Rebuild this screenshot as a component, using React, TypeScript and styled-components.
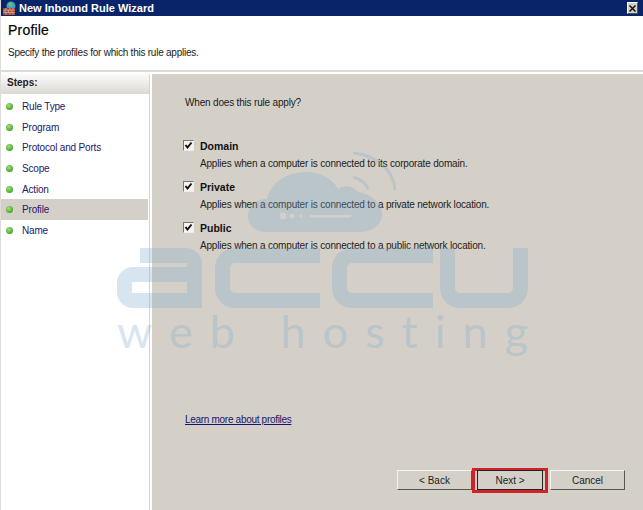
import styled, { createGlobalStyle } from 'styled-components';

const GlobalStyle = createGlobalStyle`
  html, body {
    margin: 0;
    padding: 0;
    background: #ffffff;
  }
  body {
    font-family: "Liberation Sans", Arial, sans-serif;
    font-size: 10px;
    letter-spacing: -0.18px;
    color: #111;
  }
`;

const Window = styled.div`
  position: relative;
  width: 643px;
  height: 510px;
  box-sizing: border-box;
  border-left: 1px solid #dedcd8;
  display: flex;
  flex-direction: column;
  overflow: hidden;
  background: #fff;
`;

const TitleBar = styled.div`
  height: 16px;
  flex: none;
  display: flex;
  align-items: center;
  gap: 2px;
  padding: 0 5px 0 2px;
  margin-left: -1px;
  background: #0a246a;
  color: #fff;
`;

const TitleText = styled.span`
  flex: 1;
  font-size: 11px;
  font-weight: 700;
  letter-spacing: 0;
  margin-top: -1px;
`;

const CloseButton = styled.div`
  width: 11px;
  height: 12px;
  display: flex;
  align-items: center;
  justify-content: center;
  background: #d4d0c8;
  border: 1px solid;
  border-color: #fff #555 #555 #fff;
  box-sizing: border-box;
`;

const Header = styled.header`
  height: 56px;
  flex: none;
  box-sizing: border-box;
  padding: 6px 7px 0;
  border-bottom: 2px solid #dcdad6;
`;

const Heading = styled.h1`
  margin: 0;
  font-size: 14px;
  line-height: 16px;
  letter-spacing: 0.2px;
  font-weight: 400;
  -webkit-text-stroke: 0.2px #000;
  color: #000;
`;

const Subheading = styled.p`
  margin: 8px 0 0;
  line-height: 14px;
  letter-spacing: -0.24px;
  color: #222;
`;

const Body = styled.div`
  flex: 1;
  display: flex;
  padding-top: 2px;
  min-height: 0;
`;

const Sidebar = styled.nav`
  width: 149px;
  flex: none;
  box-sizing: border-box;
  border-right: 1px solid #d8d6d2;
`;

const StepsTitle = styled.div`
  height: 20px;
  padding-left: 6px;
  font-size: 10px;
  font-weight: 700;
  line-height: 18px;
  letter-spacing: 0;
  color: #222;
  background: linear-gradient(#fbfbfa, #dcd9d3);
  margin-bottom: 2.4px;
`;

const StepRow = styled.div<{ $active?: boolean }>`
  height: 20.6px;
  display: flex;
  align-items: center;
  gap: 9px;
  padding-left: 5px;
  margin-right: 1px;
  color: #20206a;
  background: ${(p) => (p.$active ? '#d4d0c8' : 'transparent')};
`;

const StepDot = styled.span`
  width: 7px;
  height: 7px;
  border-radius: 50%;
  background: radial-gradient(circle at 40% 35%, #a5e07f, #4aa52c 70%);
`;

const Panel = styled.main`
  flex: 1;
  margin-left: 2px;
  background: #d4d0c8;
  box-sizing: border-box;
  padding: 22px 18px 20px 33px;
  display: flex;
  flex-direction: column;
`;

const Question = styled.p`
  margin: 0 0 29px;
  line-height: 14px;
  color: #1a1a1a;
`;

const Option = styled.div`
  display: grid;
  grid-template-columns: 11px auto;
  grid-template-rows: auto auto;
  align-content: start;
  column-gap: 6px;
  height: 41px;
  margin-left: -2px;
`;

const CheckBox = styled.span`
  width: 11px;
  height: 11px;
  margin-top: 1px;
  box-sizing: border-box;
  background: #f4f3f0;
  border: 1px solid;
  border-color: #777 #eee #eee #777;
  display: flex;
  align-items: center;
  justify-content: center;
`;

const OptionName = styled.div`
  font-size: 10.5px;
  line-height: 14px;
  letter-spacing: 0;
  font-weight: 700;
  color: #111;
`;

const OptionText = styled.div`
  grid-column: 2;
  margin-top: 4px;
  line-height: 14px;
  color: #222;
`;

const LearnLink = styled.a`
  margin-top: auto;
  margin-bottom: 43px;
  line-height: 14px;
  letter-spacing: -0.3px;
  color: #16166e;
  text-decoration: underline;
`;

const Buttons = styled.div`
  display: flex;
  justify-content: flex-end;
  align-items: center;
  height: 20px;
`;

const Button = styled.button<{ $primary?: boolean }>`
  width: ${(p) => (p.$primary ? '66px' : '75px')};
  height: 20px;
  box-sizing: border-box;
  padding: 0;
  font-family: inherit;
  font-size: 10px;
  color: #222;
  background: #d4d0c8;
  border: 1px solid;
  border-color: ${(p) => (p.$primary ? '#222' : '#f4f3f0 #555 #555 #f4f3f0')};
`;

const Highlight = styled.div`
  margin: 0 2px 0 0;
  height: 25px;
  display: flex;
  align-items: center;
  justify-content: center;
  box-sizing: border-box;
  width: 76px;
  border: 3px solid #d1222b;
`;

const Watermark = styled.div`
  position: absolute;
  left: 116px;
  top: 172px;
  width: 412px;
  opacity: 0.3;
  pointer-events: none;
  display: flex;
  flex-direction: column;
  align-items: stretch;
  color: #7dacce;
`;

const CloudLogo = styled.svg`
  display: block;
  width: 140px;
  height: 62px;
  margin-left: 131px;
  margin-bottom: 14px;
  overflow: visible;
`;

const BigWord = styled.div`
  display: flex;
  height: 60px;
`;

const LetterA = styled.div`
  width: 85px;
  margin-right: 13px;
  display: flex;
  flex-direction: column;
`;

const LetterATop = styled.div`
  height: 19px;
  margin-left: 23px;
  border-top: 15px solid currentColor;
  border-right: 15px solid currentColor;
  border-top-right-radius: 16px;
  box-sizing: border-box;
`;

const LetterABowl = styled.div`
  height: 41px;
  box-sizing: border-box;
  border: 15px solid currentColor;
  border-radius: 16px 0 0 16px;
`;

const LetterC = styled.div<{ $w: number; $gap: number }>`
  width: ${(p) => p.$w}px;
  margin-right: ${(p) => p.$gap}px;
  box-sizing: border-box;
  border: 15px solid currentColor;
  border-right: none;
  border-radius: 20px 0 0 20px;
`;

const LetterU = styled.div`
  width: 88px;
  box-sizing: border-box;
  border: 15px solid currentColor;
  border-top: none;
  border-radius: 0 0 20px 20px;
`;

const SmallWord = styled.div`
  margin-top: -4px;
  font-family: Lato, "Open Sans", sans-serif;
  font-weight: 400;
  font-size: 45px;
  line-height: 54px;
  letter-spacing: 17px;
  word-spacing: 0;
  white-space: nowrap;
`;

const steps = ['Rule Type', 'Program', 'Protocol and Ports', 'Scope', 'Action', 'Profile', 'Name'];

const options = [
  { name: 'Domain', text: 'Applies when a computer is connected to its corporate domain.' },
  { name: 'Private', text: 'Applies when a computer is connected to a private network location.' },
  { name: 'Public', text: 'Applies when a computer is connected to a public network location.' },
];

const FirewallIcon = () => (
  <svg width="15" height="15" viewBox="0 0 15 15">
    <circle cx="9" cy="5" r="4.5" fill="#3f9fd0" />
    <path d="M6 3 L9 1 L11 4 L8 6 Z" fill="#6cc46a" />
    <rect x="1" y="7" width="12" height="7" fill="#a8432f" />
    <path d="M1 9.2H13M1 11.5H13M4 7V9.2M8 7V9.2M11 7V9.2M3 9.2V11.5M6.5 9.2V11.5M10 9.2V11.5M4 11.5V14M8 11.5V14M11 11.5V14" stroke="#e2b7a6" strokeWidth="0.7" />
  </svg>
);

const CheckMark = () => (
  <svg width="9" height="9" viewBox="0 0 9 9">
    <path d="M1.5 4 L3.5 6.5 L7.5 1.5" fill="none" stroke="#111" strokeWidth="2" />
  </svg>
);

export default function App() {
  return (
    <>
      <GlobalStyle />
      <Window>
        <TitleBar>
          <FirewallIcon />
          <TitleText>New Inbound Rule Wizard</TitleText>
          <CloseButton>
            <svg width="7" height="7" viewBox="0 0 7 7">
              <path d="M0.5 0.5 L6.5 6.5 M6.5 0.5 L0.5 6.5" stroke="#111" strokeWidth="1.5" />
            </svg>
          </CloseButton>
        </TitleBar>
        <Header>
          <Heading>Profile</Heading>
          <Subheading>Specify the profiles for which this rule applies.</Subheading>
        </Header>
        <Body>
          <Sidebar>
            <StepsTitle>Steps:</StepsTitle>
            {steps.map((step) => (
              <StepRow key={step} $active={step === 'Profile'}>
                <StepDot />
                {step}
              </StepRow>
            ))}
          </Sidebar>
          <Panel>
            <Question>When does this rule apply?</Question>
            {options.map((option) => (
              <Option key={option.name}>
                <CheckBox>
                  <CheckMark />
                </CheckBox>
                <OptionName>{option.name}</OptionName>
                <OptionText>{option.text}</OptionText>
              </Option>
            ))}
            <LearnLink>Learn more about profiles</LearnLink>
            <Buttons>
              <Button>&lt; Back</Button>
              <Highlight>
                <Button $primary>Next &gt;</Button>
              </Highlight>
              <Button>Cancel</Button>
            </Buttons>
          </Panel>
        </Body>
        <Watermark>
          <CloudLogo viewBox="0 0 140 62">
            <path
              d="M18 60 C6 60 0 52 0 44 C0 34 8 27 19 27 C22 12 38 0 58 0 C72 0 84 6 90 17 C95 13 104 13 110 20 C124 22 134 32 134 42 C134 53 124 60 112 60 Z"
              fill="currentColor"
            />
            <circle cx="35" cy="44" r="3.5" fill="#c8d4dc" />
            <circle cx="44" cy="44" r="2.5" fill="#c8d4dc" />
            <circle cx="53" cy="44" r="1.5" fill="#c8d4dc" />
            <rect x="62" y="43" width="41" height="2.5" fill="#c8d4dc" />
            <path d="M105 5 C112 7 118 11 120 17" stroke="currentColor" strokeWidth="3" fill="none" />
            <path d="M105 -19 C128 -17 146 -2 147 18" stroke="currentColor" strokeWidth="3" fill="none" />
          </CloudLogo>
          <BigWord>
            <LetterA>
              <LetterATop />
              <LetterABowl />
            </LetterA>
            <LetterC $w={105} $gap={12} />
            <LetterC $w={101} $gap={7} />
            <LetterU />
          </BigWord>
          <SmallWord>web hosting</SmallWord>
        </Watermark>
      </Window>
    </>
  );
}
